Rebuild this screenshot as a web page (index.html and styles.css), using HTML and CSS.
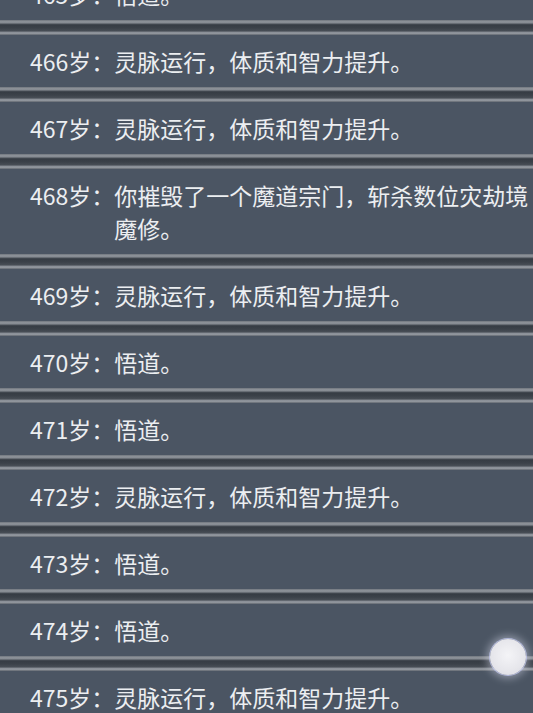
FILE: index.html
```html
<!DOCTYPE html>
<html lang="zh-CN">
  <head>
    <meta charset="UTF-8" />
    <meta name="viewport" content="width=device-width, initial-scale=1.0" />
    <title>人生记录</title>
    <link rel="stylesheet" href="styles.css">
  </head>
  <body>
    <!-- life log, one entry per year -->
    <div class="log">
      <div class="entry"><span class="age">465岁：</span><span class="event">悟道。</span></div>
      <div class="entry"><span class="age">466岁：</span><span class="event">灵脉运行，体质和智力提升。</span></div>
      <div class="entry"><span class="age">467岁：</span><span class="event">灵脉运行，体质和智力提升。</span></div>
      <div class="entry"><span class="age">468岁：</span><span class="event">你摧毁了一个魔道宗门，斩杀数位灾劫境魔修。</span></div>
      <div class="entry"><span class="age">469岁：</span><span class="event">灵脉运行，体质和智力提升。</span></div>
      <div class="entry"><span class="age">470岁：</span><span class="event">悟道。</span></div>
      <div class="entry"><span class="age">471岁：</span><span class="event">悟道。</span></div>
      <div class="entry"><span class="age">472岁：</span><span class="event">灵脉运行，体质和智力提升。</span></div>
      <div class="entry"><span class="age">473岁：</span><span class="event">悟道。</span></div>
      <div class="entry"><span class="age">474岁：</span><span class="event">悟道。</span></div>
      <div class="entry"><span class="age">475岁：</span><span class="event">灵脉运行，体质和智力提升。</span></div>
    </div>

    <!-- floating assistive ball -->
    <div class="float-ball"></div>
  </body>
</html>
```

FILE: styles.css
```css
body {
  margin: 0;
  background-color: #4b5563;
  font-family: "Noto Sans CJK SC", "Noto Sans", sans-serif;
  color: #eceef1;
  overflow: hidden;
  height: 713px;
}
.log {
  width: 580px;
  margin-top: -32px;
}
.entry {
  display: flex;
  padding: 10px 30px 9px 30px;
  font-size: 23px;
  line-height: 33px;
}
/* grooved divider drawn on top of every entry after the first */
.entry + .entry {
  padding-top: 25px;
  background: linear-gradient(
      to bottom,
      #666c74 0px,
      #8c9198 1px,
      #868b92 3px,
      #4a5058 4px,
      #363c44 5px,
      #3b4149 8px,
      #484e56 11px,
      #7d828a 12px,
      #9a9fa6 13px,
      #858a91 14px,
      #5c626b 15px
    )
    top left / 100% 15px no-repeat;
}
.age {
  flex: none;
}
.event {
  flex: 1;
}
.float-ball {
  position: fixed;
  left: 490px;
  top: 639px;
  width: 36px;
  height: 36px;
  border-radius: 50%;
  background: radial-gradient(circle at 50% 45%, #f4f4f7 0%, #e6e6eb 60%, #d6d7e2 100%);
  box-shadow: 0 0 0 1px rgba(200, 205, 250, 0.7), 0 0 8px 3px rgba(235, 238, 255, 0.45);
}
```
